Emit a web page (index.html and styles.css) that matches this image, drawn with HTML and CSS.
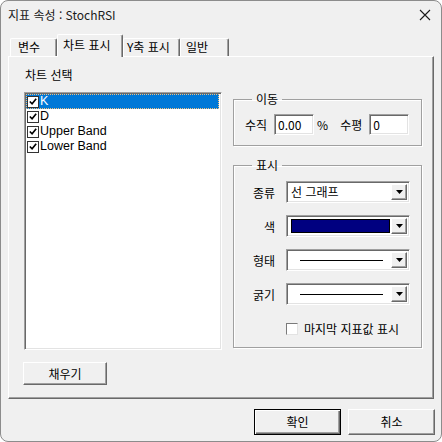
FILE: index.html
```html
<!DOCTYPE html>
<html lang="ko">
<head>
<meta charset="utf-8">
<title>지표 속성</title>
<link rel="stylesheet" href="styles.css">
</head>
<body>
<div class="window">
  <div class="titlebar">
    <span class="title">지표 속성 : StochRSI</span>
    <svg class="close" width="12" height="12" viewBox="0 0 12 12"><path d="M1 1 L11 11 M11 1 L1 11" stroke="#1a1a1a" stroke-width="1.1" fill="none"/></svg>
  </div>
  <div class="tabs">
    <div class="tab t1">변수</div>
    <div class="tab active t2">차트 표시</div>
    <div class="tab t3">Y축 표시</div>
    <div class="tab t4">일반</div>
  </div>
  <div class="panel">
    <div class="cols">
      <div class="leftcol">
        <div class="label">차트 선택</div>
        <div class="listbox">
          <div class="item selected"><span class="cb"><svg width="11" height="11" viewBox="0 0 11 11"><path d="M2 5.5 L4.5 8 L9 2.5" stroke="#000" stroke-width="1.8" fill="none"/></svg></span><span class="itext">K</span></div>
          <div class="item"><span class="cb"><svg width="11" height="11" viewBox="0 0 11 11"><path d="M2 5.5 L4.5 8 L9 2.5" stroke="#000" stroke-width="1.8" fill="none"/></svg></span><span class="itext">D</span></div>
          <div class="item"><span class="cb"><svg width="11" height="11" viewBox="0 0 11 11"><path d="M2 5.5 L4.5 8 L9 2.5" stroke="#000" stroke-width="1.8" fill="none"/></svg></span><span class="itext">Upper Band</span></div>
          <div class="item"><span class="cb"><svg width="11" height="11" viewBox="0 0 11 11"><path d="M2 5.5 L4.5 8 L9 2.5" stroke="#000" stroke-width="1.8" fill="none"/></svg></span><span class="itext">Lower Band</span></div>
        </div>
        <div class="btn fill">채우기</div>
      </div>
      <div class="rightcol">
        <fieldset class="group g1">
          <legend>이동</legend>
          <div class="moverow">
            <span>수직</span>
            <div class="input">0.00</div>
            <span class="pct">%</span>
            <span class="hlabel">수평</span>
            <div class="input">0</div>
          </div>
        </fieldset>
        <fieldset class="group g2">
          <legend>표시</legend>
          <div class="formgrid">
            <span class="flabel">종류</span>
            <div class="combo"><div class="cval">선 그래프</div><div class="dd"><svg width="7" height="4" viewBox="0 0 7 4"><path d="M0 0 H7 L3.5 4 Z" fill="#000"/></svg></div></div>
            <span class="flabel">색</span>
            <div class="combo"><div class="cval"><div class="swatch"></div></div><div class="dd"><svg width="7" height="4" viewBox="0 0 7 4"><path d="M0 0 H7 L3.5 4 Z" fill="#000"/></svg></div></div>
            <span class="flabel">형태</span>
            <div class="combo"><div class="cval"><div class="line"></div></div><div class="dd"><svg width="7" height="4" viewBox="0 0 7 4"><path d="M0 0 H7 L3.5 4 Z" fill="#000"/></svg></div></div>
            <span class="flabel">굵기</span>
            <div class="combo"><div class="cval"><div class="line"></div></div><div class="dd"><svg width="7" height="4" viewBox="0 0 7 4"><path d="M0 0 H7 L3.5 4 Z" fill="#000"/></svg></div></div>
          </div>
          <div class="lastrow"><span class="cb2"></span><span>마지막 지표값 표시</span></div>
        </fieldset>
      </div>
    </div>
  </div>
  <div class="footer">
    <div class="btn ok">확인</div>
    <div class="btn">취소</div>
  </div>
</div>
</body>
</html>
```
FILE: styles.css
```css
* { box-sizing: border-box; }
html, body { margin: 0; padding: 0; background: #ffffff; }
body {
  font-family: "Noto Sans CJK KR", "Noto Sans", sans-serif;
  font-size: 12px;
  color: #000;
}
.window {
  width: 442px;
  height: 442px;
  border: 1px solid #8c8c8c;
  border-radius: 8px;
  background: #f0f0f0;
  overflow: hidden;
}
.titlebar {
  height: 27px;
  display: flex;
  align-items: center;
  justify-content: space-between;
  padding: 0 10px 0 7px;
  line-height: 16px;
  color: #1a1a1a;
}
.tabs {
  margin-top: 6px;
  height: 22px;
  padding-left: 9px;
  display: flex;
  align-items: flex-end;
}
.tab {
  height: 18px;
  border-top: 1px solid #ffffff;
  border-left: 1px solid #ffffff;
  border-right: 1px solid #696969;
  box-shadow: inset -1px 0 0 #a0a0a0;
  border-radius: 2px 2px 0 0;
  line-height: 16px;
  padding-left: 6px;
  background: #f0f0f0;
}
.t1 { width: 47px; padding-left: 7px; }
.t2 { width: 66px; height: 23px; margin-bottom: -1px; position: relative; z-index: 1; padding-left: 5px; line-height: 19px; }
.t3 { width: 57px; padding-left: 3px; }
.t4 { width: 49px; padding-left: 5px; }
.panel {
  margin: 0 7px;
  height: 343px;
  border-top: 1px solid #ffffff;
  border-left: 1px solid #ffffff;
  border-right: 1px solid #696969;
  border-bottom: 1px solid #696969;
  box-shadow: inset -1px -1px 0 #a0a0a0;
  padding: 10px 0 0 15px;
}
.cols {
  display: flex;
  gap: 11px;
  align-items: flex-start;
}
.leftcol { width: 198px; display: flex; flex-direction: column; }
.label { line-height: 16px; height: 16px; padding-left: 1px; }
.listbox {
  margin-top: 9px;
  height: 258px;
  background: #fff;
  border-top: 1px solid #a0a0a0;
  border-left: 1px solid #a0a0a0;
  border-right: 1px solid #ffffff;
  border-bottom: 1px solid #ffffff;
  box-shadow: inset 1px 1px 0 #696969, inset -1px -1px 0 #e3e3e3;
  padding: 1px 2px 2px 1px;
}
.item {
  height: 15px;
  display: flex;
  align-items: center;
}
.item.selected { background: #0078d7; color: #fff; outline: 1px dotted #f0c080; outline-offset: -1px; }
.cb {
  width: 12px;
  height: 12px;
  background: #fff;
  border: 1px solid #333;
  display: flex;
  align-items: center;
  justify-content: center;
  margin-left: 1px;
}
.cb svg { display: block; }
.itext {
  display: block;
  height: 15px;
  line-height: 15px;
  margin-left: 1px;
  font-family: "Liberation Sans", Arial, sans-serif;
  font-size: 12.5px;
}
.btn {
  height: 23px;
  background: #f0f0f0;
  border-top: 1px solid #ffffff;
  border-left: 1px solid #ffffff;
  border-right: 1px solid #696969;
  border-bottom: 1px solid #696969;
  box-shadow: inset -1px -1px 0 #a0a0a0;
  display: flex;
  align-items: center;
  justify-content: center;
  line-height: 16px;
}
.fill { width: 84px; margin-top: 12px; margin-left: -1px; }
.rightcol { width: 189px; padding-top: 24px; display: flex; flex-direction: column; }
.group {
  margin: 0;
  border: 1px solid #a0a0a0;
  box-shadow: 1px 1px 0 #ffffff, inset 1px 1px 0 #ffffff;
  padding: 7px 0 10px 11px;
}
.group legend {
  padding: 0 4px;
  margin-left: 7px;
  line-height: 16px;
}
.g2 { margin-top: 11px; padding-top: 8px; padding-bottom: 12px; height: 191px; }
.moverow { display: flex; align-items: center; height: 21px; }
.input {
  width: 40px;
  height: 21px;
  margin-left: 7px;
  background: #fff;
  border-top: 1px solid #a0a0a0;
  border-left: 1px solid #a0a0a0;
  border-right: 1px solid #ffffff;
  border-bottom: 1px solid #ffffff;
  box-shadow: inset 1px 1px 0 #696969, inset -1px -1px 0 #e3e3e3;
  padding-left: 3px;
  line-height: 19px;
}
.pct { margin-left: 3px; }
.hlabel { margin-left: 12px; }
.formgrid {
  display: grid;
  grid-template-columns: 30px 124px;
  column-gap: 11px;
  row-gap: 12px;
  align-items: center;
}
.flabel { text-align: right; }
.combo {
  height: 22px;
  background: #fff;
  border-top: 1px solid #a0a0a0;
  border-left: 1px solid #a0a0a0;
  border-right: 1px solid #ffffff;
  border-bottom: 1px solid #ffffff;
  box-shadow: inset 1px 1px 0 #696969, inset -1px -1px 0 #e3e3e3;
  display: flex;
  padding: 2px;
}
.cval {
  flex: 1;
  display: flex;
  align-items: center;
  padding-left: 2px;
  line-height: 16px;
}
.swatch {
  width: 99px;
  height: 14px;
  background: #000080;
  border: 1px solid #000;
}
.line { width: 83px; height: 1px; background: #000; margin-left: 9px; }
.dd {
  width: 16px;
  background: #f0f0f0;
  border-top: 1px solid #ffffff;
  border-left: 1px solid #ffffff;
  border-right: 1px solid #696969;
  border-bottom: 1px solid #696969;
  box-shadow: inset -1px -1px 0 #a0a0a0;
  display: flex;
  align-items: center;
  justify-content: center;
}
.dd svg { display: block; }
.lastrow {
  display: flex;
  align-items: center;
  margin-top: 16px;
  margin-left: 41px;
  line-height: 16px;
  gap: 6px;
}
.cb2 {
  width: 12px;
  height: 12px;
  background: #fff;
  border-top: 1px solid #7a7a7a;
  border-left: 1px solid #7a7a7a;
  border-right: 1px solid #e3e3e3;
  border-bottom: 1px solid #e3e3e3;
}
.footer {
  display: flex;
  justify-content: flex-end;
  gap: 7px;
  padding-right: 6px;
  margin-top: 10px;
}
.footer .btn { width: 87px; height: 26px; }
.footer .ok { border: 1px solid #000; box-shadow: inset 1px 1px 0 #fff, inset -1px -1px 0 #696969, inset -2px -2px 0 #a0a0a0; }
```
